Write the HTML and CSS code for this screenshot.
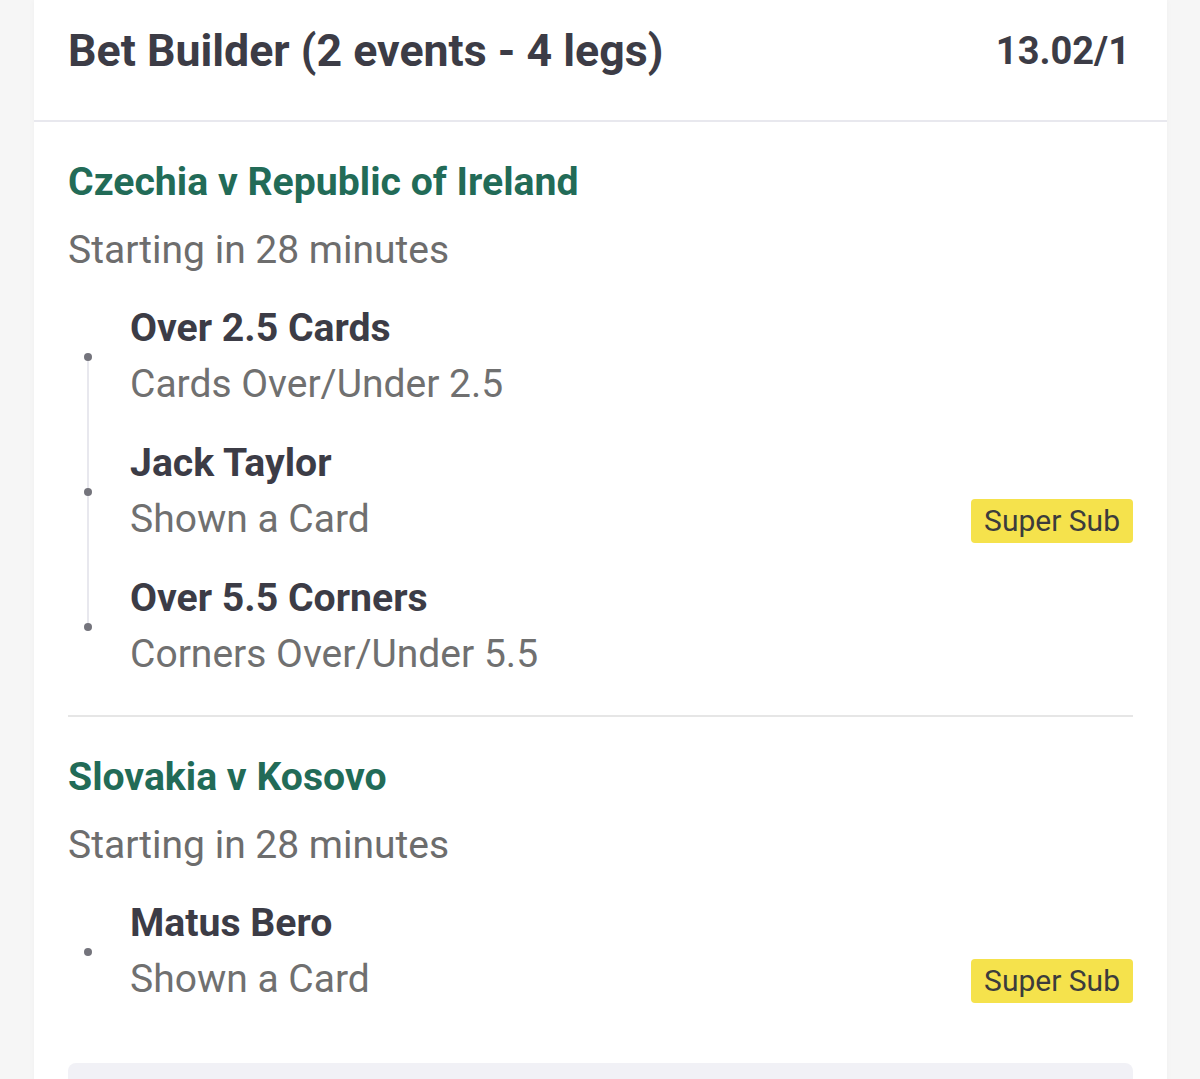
FILE: index.html
```html
<!DOCTYPE html>
<html lang="en">
<head>
<meta charset="utf-8">
<title>Bet Builder</title>
<link rel="stylesheet" href="styles.css">
</head>
<body>
<div class="card">
  <header class="card-header">
    <h1 class="title">Bet Builder (2 events - 4 legs)</h1>
    <span class="odds">13.02/1</span>
  </header>

  <section class="event">
    <h2 class="event-name">Czechia v Republic of Ireland</h2>
    <p class="event-time">Starting in 28 minutes</p>
    <ul class="legs">
      <li class="leg">
        <div class="leg-title">Over 2.5 Cards</div>
        <div class="leg-sub"><span>Cards Over/Under 2.5</span></div>
      </li>
      <li class="leg">
        <div class="leg-title">Jack Taylor</div>
        <div class="leg-sub"><span>Shown a Card</span><span class="badge">Super Sub</span></div>
      </li>
      <li class="leg">
        <div class="leg-title">Over 5.5 Corners</div>
        <div class="leg-sub"><span>Corners Over/Under 5.5</span></div>
      </li>
    </ul>
  </section>

  <section class="event">
    <h2 class="event-name">Slovakia v Kosovo</h2>
    <p class="event-time">Starting in 28 minutes</p>
    <ul class="legs">
      <li class="leg">
        <div class="leg-title">Matus Bero</div>
        <div class="leg-sub"><span>Shown a Card</span><span class="badge">Super Sub</span></div>
      </li>
    </ul>
  </section>

  <div class="footer-box"></div>
</div>
</body>
</html>
```

FILE: styles.css
```css
* { box-sizing: border-box; }

html, body {
  margin: 0;
  padding: 0;
}

body {
  background: #f6f6f6;
  font-family: Roboto, "Liberation Sans", sans-serif;
  color: #3c3c46;
  height: 1079px;
  overflow: hidden;
}

.card {
  margin: 0 33px 0 34px;
  background: #ffffff;
  min-height: 1079px;
  padding: 0 34px;
  box-shadow: 0 0 6px rgba(0,0,0,0.03);
}

.card-header {
  display: flex;
  justify-content: space-between;
  align-items: center;
  height: 122px;
  margin: 0 -34px;
  padding: 0 37px 18px 34px;
  border-bottom: 2px solid #e8e8ee;
}

.title {
  margin: 0;
  font-size: 44.7px;
  font-weight: 700;
  color: #3c3c46;
}

.odds {
  font-size: 38px;
  font-weight: 700;
  color: #3c3c46;
}

.event {
  padding-top: 32px;
  padding-bottom: 33px;
  border-bottom: 2px solid #e6e6e6;
}

.event:last-of-type {
  border-bottom: none;
  padding-bottom: 56px;
}

.event-name {
  margin: 0;
  font-size: 39.2px;
  line-height: 56px;
  font-weight: 700;
  color: #226b57;
}

.event-time {
  margin: 12px 0 0;
  font-size: 39px;
  line-height: 56px;
  color: #6d6d6d;
}

.legs {
  list-style: none;
  margin: 22px 0 0;
  padding: 0 0 0 62px;
}

.leg {
  position: relative;
  padding-bottom: 23px;
}

.leg:last-child {
  padding-bottom: 0;
}

.leg::before {
  content: "";
  position: absolute;
  left: -46px;
  top: 53px;
  width: 8px;
  height: 8px;
  border-radius: 50%;
  background: #74747c;
  z-index: 1;
}

.leg:not(:last-child)::after {
  content: "";
  position: absolute;
  left: -43px;
  top: 57px;
  width: 2px;
  height: 135px;
  background: #e8e8ee;
}

.leg-title {
  font-size: 39.2px;
  line-height: 56px;
  font-weight: 700;
  color: #3c3c46;
}

.leg-sub {
  display: flex;
  justify-content: space-between;
  align-items: center;
  font-size: 39px;
  line-height: 56px;
  color: #707070;
}

.badge {
  display: inline-block;
  background: #f5e24c;
  color: #3c3c3c;
  font-size: 30px;
  line-height: 44px;
  height: 44px;
  padding: 0 13px;
  border-radius: 4px;
  margin-top: 4px;
  margin-right: 0;
}

.footer-box {
  height: 60px;
  background: #f1f1f6;
  border-radius: 8px 8px 0 0;
}
```
